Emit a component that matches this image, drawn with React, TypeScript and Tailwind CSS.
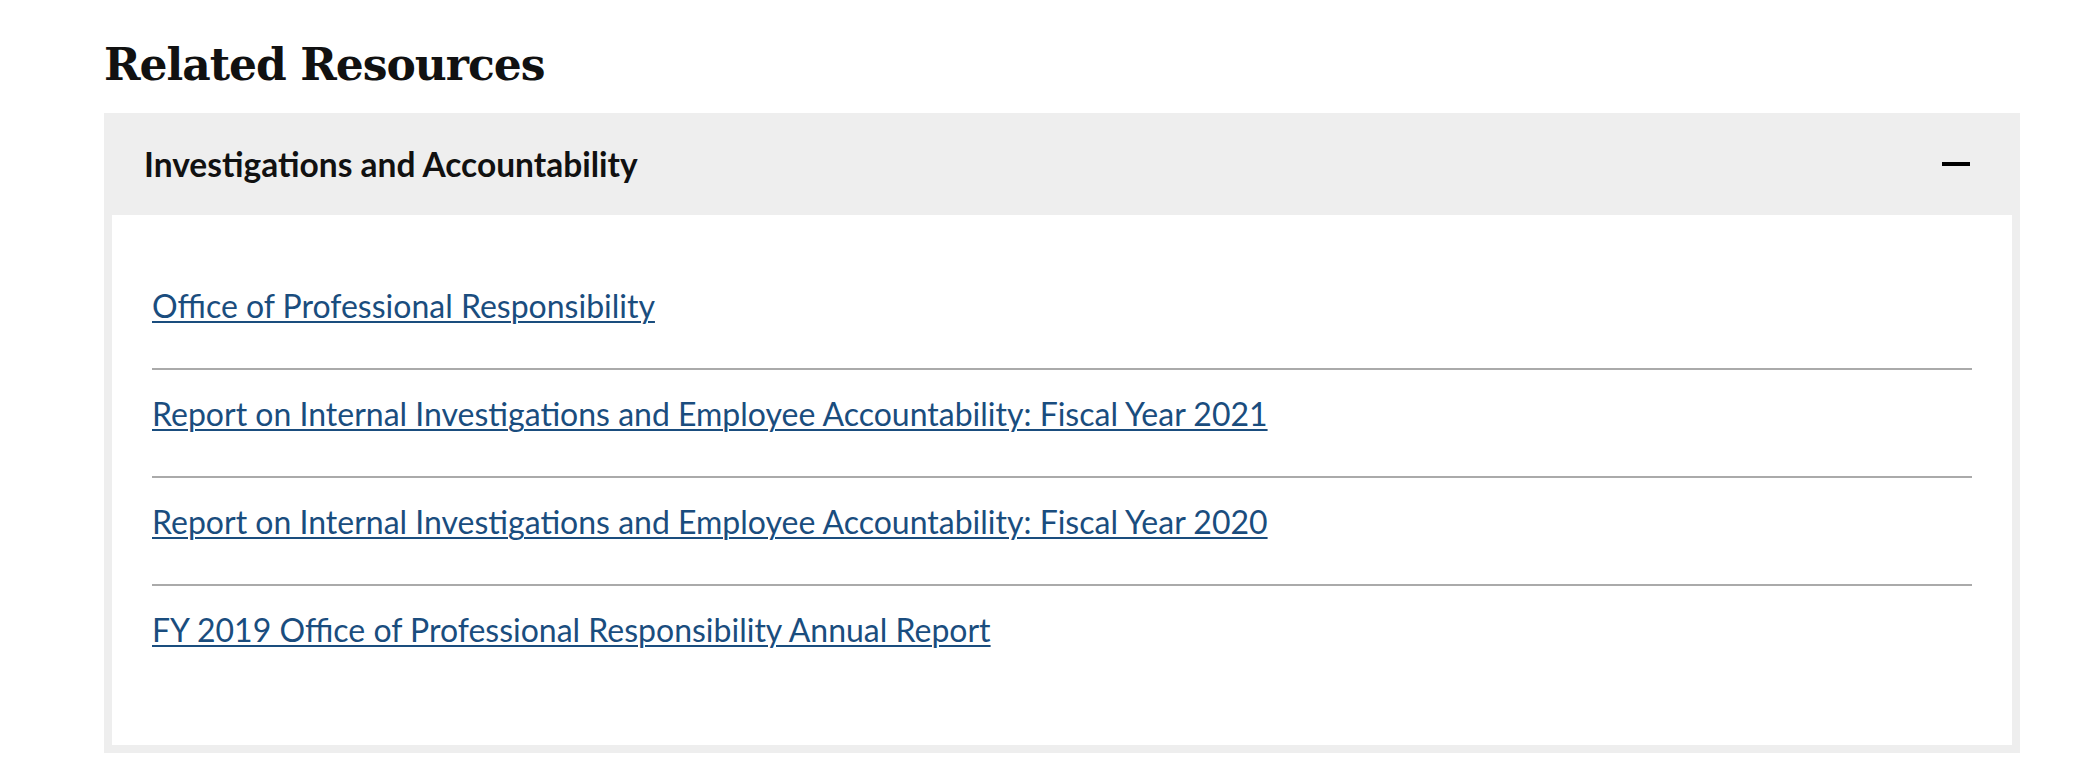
import React from "react";

const links = [
  "Office of Professional Responsibility",
  "Report on Internal Investigations and Employee Accountability: Fiscal Year 2021",
  "Report on Internal Investigations and Employee Accountability: Fiscal Year 2020",
  "FY 2019 Office of Professional Responsibility Annual Report",
];

export default function App() {
  return (
    <div className="w-[2100px] h-[778px] bg-white pl-[104px] pr-[80px] pt-[35px]">
      <h2
        className="text-[44px] font-bold leading-[60px] tracking-[-1px] text-[#111] mb-[18px]"
        style={{ fontFamily: '"DejaVu Serif", serif' }}
      >
        Related Resources
      </h2>
      <div className="bg-[#eeeeee] px-[8px] pb-[8px]">
        <div className="h-[102px] flex items-center justify-between pl-[32px] pr-[42px]">
          <span
            className="text-[33.5px] font-bold text-[#111]"
            style={{ fontFamily: 'Lato, sans-serif' }}
          >
            Investigations and Accountability
          </span>
          <span className="block w-[28px] h-[4px] bg-black" />
        </div>
        <ul className="bg-white px-[40px] pt-[47px] pb-[53px]" style={{ fontFamily: 'Lato, sans-serif' }}>
          {links.map((l, i) => (
            <li
              key={l}
              className={
                i === 0
                  ? "pt-[24px] pb-[42px]"
                  : "pt-[24px] pb-[42px] border-t-2 border-[#aaaaaa]"
              }
            >
              <a
                href="#"
                className="text-[32px] leading-[40px] text-[#1a4d7e] underline underline-offset-[3px] decoration-[2px]"
              >
                {l}
              </a>
            </li>
          ))}
        </ul>
      </div>
    </div>
  );
}
